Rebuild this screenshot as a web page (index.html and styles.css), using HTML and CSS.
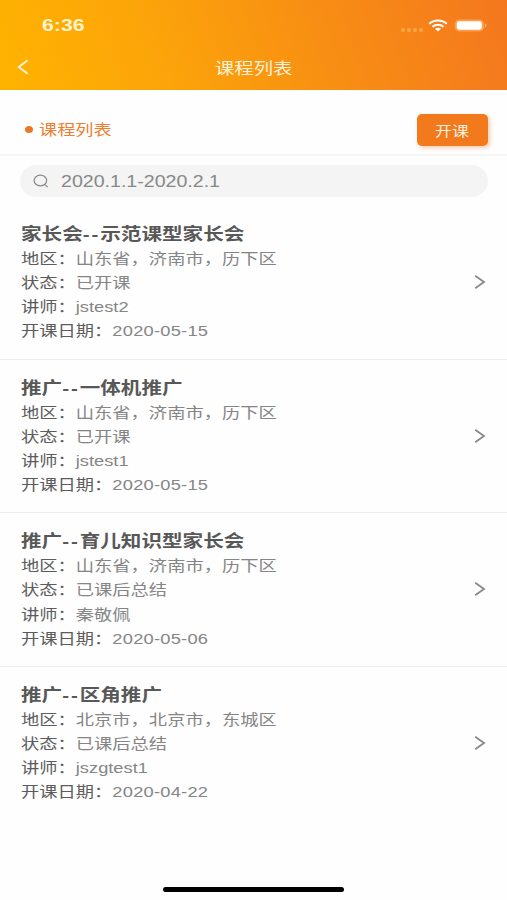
FILE: index.html
```html
<!DOCTYPE html>
<html lang="zh-CN">
<head>
<meta charset="utf-8">
<title>课程列表</title>
<link rel="stylesheet" href="styles.css">
</head>
<body>
<header class="header">
  <div class="status">
    <span class="wide time">6:36</span>
    <div class="indicators">
      <span class="dots"><i></i><i></i><i></i><i></i></span>
      <svg class="wifi" width="20" height="13" viewBox="0 0 20 13" fill="none" stroke="#fff" stroke-width="2.1"><path d="M1.2 4.8C6 .4 14 .4 18.8 4.8M4.5 7.7c3-2.7 8-2.7 11 0"/><path d="M7 9.8c1.7-1.4 4.3-1.4 6 0L10 12.6z" fill="#fff" stroke="none"/></svg>
      <svg class="battery" width="33" height="13" viewBox="0 0 33 13"><rect x=".6" y=".6" width="29.5" height="11.8" rx="4.5" fill="#ffb36b" fill-opacity=".65"/><rect x="2.8" y="2.3" width="25" height="8.4" rx="2.4" fill="#fff"/><path d="M31 4.5c1.8.6 1.8 3.4 0 4z" fill="#ffc58f"/></svg>
    </div>
  </div>
  <div class="nav">
    <svg class="back" width="12" height="16" viewBox="0 0 12 16" fill="none" stroke="#fff3d8" stroke-width="1.9"><path d="M10.6 1.2 1.8 8l8.8 6.8"/></svg>
    <h1 class="wide page-title">课程列表</h1>
  </div>
</header>
<section class="toolbar">
  <div class="section-name"><i class="bullet"></i><span class="wide">课程列表</span></div>
  <button class="open-btn"><span class="wide">开课</span></button>
</section>
<div class="search">
  <svg width="16" height="14" viewBox="0 0 16 14" fill="none" stroke="#888" stroke-width="1.2"><ellipse cx="7.4" cy="6.5" rx="6.3" ry="5.4"/><path d="m11.6 10.4 3.2 2.7"/></svg>
  <span class="wide query">2020.1.1-2020.2.1</span>
</div>
<main class="list">
  <article class="item">
    <div class="info">
      <h2 class="wide">家长会<span class="dash">--</span>示范课型家长会</h2>
      <p class="wide">地区：<span>山东省，济南市，历下区</span></p>
      <p class="wide">状态：<span>已开课</span></p>
      <p class="wide">讲师：<span>jstest2</span></p>
      <p class="wide">开课日期：<span class="date">2020-05-15</span></p>
    </div>
    <svg class="more" width="12" height="16" viewBox="0 0 12 16"><path d="M1.2 1.7 10 8l-8.8 6.3"/></svg>
  </article>
  <article class="item">
    <div class="info">
      <h2 class="wide">推广<span class="dash">--</span>一体机推广</h2>
      <p class="wide">地区：<span>山东省，济南市，历下区</span></p>
      <p class="wide">状态：<span>已开课</span></p>
      <p class="wide">讲师：<span>jstest1</span></p>
      <p class="wide">开课日期：<span class="date">2020-05-15</span></p>
    </div>
    <svg class="more" width="12" height="16" viewBox="0 0 12 16"><path d="M1.2 1.7 10 8l-8.8 6.3"/></svg>
  </article>
  <article class="item">
    <div class="info">
      <h2 class="wide">推广<span class="dash">--</span>育儿知识型家长会</h2>
      <p class="wide">地区：<span>山东省，济南市，历下区</span></p>
      <p class="wide">状态：<span>已课后总结</span></p>
      <p class="wide">讲师：<span>秦敬佩</span></p>
      <p class="wide">开课日期：<span class="date">2020-05-06</span></p>
    </div>
    <svg class="more" width="12" height="16" viewBox="0 0 12 16"><path d="M1.2 1.7 10 8l-8.8 6.3"/></svg>
  </article>
  <article class="item">
    <div class="info">
      <h2 class="wide">推广<span class="dash">--</span>区角推广</h2>
      <p class="wide">地区：<span>北京市，北京市，东城区</span></p>
      <p class="wide">状态：<span>已课后总结</span></p>
      <p class="wide">讲师：<span>jszgtest1</span></p>
      <p class="wide">开课日期：<span class="date">2020-04-22</span></p>
    </div>
    <svg class="more" width="12" height="16" viewBox="0 0 12 16"><path d="M1.2 1.7 10 8l-8.8 6.3"/></svg>
  </article>
</main>
<div class="home-bar"></div>
</body>
</html>
```
FILE: styles.css
```css
* { box-sizing: border-box; margin: 0; padding: 0; }
body {
  width: 507px;
  height: 900px;
  overflow: hidden;
  display: flex;
  flex-direction: column;
  background: #fefefe;
  font-family: "Liberation Sans", "Noto Sans CJK SC", sans-serif;
  color: #555;
}
svg { display: block; flex: none; }
/* Expanded letterforms */
.wide { display: block; width: max-content; white-space: nowrap; transform: scaleX(1.21); transform-origin: left center; }

.header { height: 90px; flex: none; background: linear-gradient(70deg, #ffb300 0%, #fca509 30%, #f88f13 62%, #f4771e 100%); }
.status { height: 51px; padding: 0 21px 0 42px; display: flex; justify-content: space-between; align-items: center; }
.time { font-size: 17px; font-weight: 700; color: #fff3d0; transform: scaleX(1.25); }
.indicators { display: flex; align-items: center; }
.dots { display: flex; gap: 2px; margin: 8px 5px 0 0; }
.dots i { width: 4px; height: 4px; border-radius: 50%; background: #f9a648; }
.battery { margin-left: 6px; margin-right: -1px; }
.nav { height: 34px; padding-left: 17px; display: flex; align-items: center; }
.back { margin-top: -2px; }
.page-title { margin: 1px 0 0 186px; font-size: 16px; font-weight: 400; line-height: 24px; color: #fff0d8; }

.toolbar { height: 66px; flex: none; padding: 15px 19px 0 25px; display: flex; justify-content: space-between; align-items: center; border-bottom: 2px solid #f5f5f5; }
.section-name { display: flex; align-items: center; font-size: 15px; line-height: 24px; color: #ec7f32; }
.bullet { width: 8px; height: 7px; border-radius: 50%; background: #e87a25; margin-right: 6px; }
.open-btn { width: 71px; height: 32px; padding-left: 18px; border: 0; border-radius: 5px; background: #f2791c; box-shadow: 2px 2px 4px #f9cdb2; color: #fff0df; font: 14px "Noto Sans CJK SC", sans-serif; }

.search { height: 32px; flex: none; margin: 9px 19px 0 20px; padding-left: 13px; border-radius: 16px; background: #f4f4f4; display: flex; align-items: center; }
.query { margin: 1px 0 0 12px; font-size: 16.2px; color: #888; }

.list { margin-top: 9px; }
.item { height: 153.7px; padding: 17px 21px 0 20.5px; display: flex; justify-content: space-between; border-bottom: 1px solid #eee; }
.item:last-child { border-bottom: 0; }
.item h2 { font-size: 17px; line-height: 24px; font-weight: 700; color: #585858; }
.dash { letter-spacing: 1.6px; }
.item p { font-size: 15.1px; line-height: 24.1px; color: #5c5c5c; }
.item p span { color: #858585; }
.item .date { letter-spacing: .2px; }
.more { margin-top: 51px; fill: none; stroke: #888; stroke-width: 1.8; }

.home-bar { width: 181px; height: 5px; margin: auto auto 8px 163px; border-radius: 3px; background: #000; }
```
